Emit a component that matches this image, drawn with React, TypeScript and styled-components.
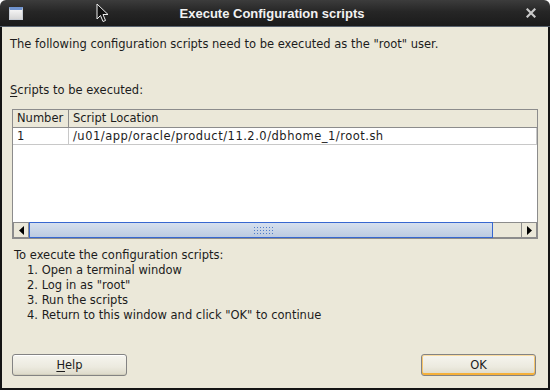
import React from "react";
import styled, { createGlobalStyle } from "styled-components";

const Global = createGlobalStyle`
  html, body { margin: 0; padding: 0; background: #ffffff; }
  #root { width: 550px; height: 390px; }
`;

const Window = styled.div`
  position: relative;
  width: 550px;
  height: 390px;
  display: flex;
  flex-direction: column;
  font-family: "DejaVu Sans", "Liberation Sans", sans-serif;
  font-size: 11.5px;
  color: #1c1c1c;
  overflow: hidden;
`;

const TitleBar = styled.div`
  height: 26px;
  flex: none;
  display: flex;
  align-items: center;
  padding: 0 12px 0 9px;
  background: linear-gradient(#3c3c3c, #262626 45%, #1b1b1b);
  border-radius: 6px 6px 0 0;
  border-bottom: 1px solid #59636f;
`;

const TitleText = styled.div`
  flex: 1;
  text-align: center;
  font-family: "Liberation Sans", Arial, sans-serif;
  font-weight: bold;
  font-size: 13px;
  color: #f2f2f2;
  padding-right: 3px;
`;

const WinIcon = styled.div`
  width: 12px;
  height: 9px;
  border: 1px solid #c8cdd5;
  border-top: 3px solid #6f93cf;
  background: linear-gradient(#f4f4f4, #d6d6d6);
  box-sizing: content-box;
  margin-top: 1px;
`;

const CloseBtn = styled.div`
  width: 14px;
  display: flex;
  justify-content: center;
`;

const Body = styled.div`
  flex: 1;
  display: flex;
  flex-direction: column;
  background: #ebe8d9;
  border: 2px solid #141414;
  border-top: none;
  padding: 10px 10px 12px 8px;
`;

const Para = styled.div`
  line-height: 15px;
  height: 15px;
  white-space: nowrap;
`;

const Label = styled(Para)`
  margin-top: 31px;
`;

const U = styled.span`
  text-decoration: underline;
  text-underline-offset: 2px;
`;

const ScrollPane = styled.div`
  margin: 11px 0 0 2px;
  width: 524px;
  height: 128px;
  border: 1px solid #8c8c8c;
  background: #ffffff;
  display: flex;
  flex-direction: column;
`;

const Row = styled.div<{ $header?: boolean }>`
  display: grid;
  grid-template-columns: 56px 1fr;
  height: ${(p) => (p.$header ? 17 : 16)}px;
  background: ${(p) => (p.$header ? "#ebe8d9" : "#ffffff")};
  border-bottom: 1px solid ${(p) => (p.$header ? "#8c8c8c" : "#c8c8c8")};
`;

const Cell = styled.div<{ $header?: boolean; $wide?: boolean }>`
  padding-left: 4px;
  line-height: ${(p) => (p.$header ? 17 : 16)}px;
  letter-spacing: ${(p) => (p.$wide ? "0.5px" : "0")};
  border-right: 1px solid ${(p) => (p.$header ? "#8c8c8c" : "#c8c8c8")};
  white-space: nowrap;
  &:last-child { border-right: ${(p) => (p.$header ? "none" : "1px solid #c8c8c8")}; }
`;

const Viewport = styled.div`
  flex: 1;
`;

const HScroll = styled.div`
  height: 16px;
  display: flex;
  border-top: 1px solid #ffffff;
`;

const ArrowBtn = styled.div`
  width: 14px;
  height: 14px;
  border: 1px solid #8c8c8c;
  background: #ebe8d9;
  display: flex;
  align-items: center;
  justify-content: center;
  flex: none;
`;

const Thumb = styled.div`
  width: 462px;
  height: 14px;
  border: 1px solid #3767d0;
  background: linear-gradient(#d6e0ee, #bccbe0);
  display: flex;
  align-items: center;
  justify-content: center;
  flex: none;
`;

const Grip = styled.div`
  width: 21px;
  height: 8px;
  background-image: radial-gradient(circle, #4f7cc9 0.8px, transparent 1px);
  background-size: 3px 3px;
  margin-left: 5px;
`;

const Track = styled.div`
  flex: 1;
  height: 14px;
  border: 1px solid #8c8c8c;
  border-left: none;
  border-right: none;
  background: #ebe8d9;
`;

const Steps = styled.div`
  margin-top: 9px;
  margin-left: 4px;
  display: flex;
  flex-direction: column;
`;

const Step = styled(Para)`
  padding-left: 13px;
`;

const Spacer = styled.div`
  flex: 1;
`;

const Buttons = styled.div`
  display: flex;
  justify-content: space-between;
  padding: 0 2px 0 2px;
`;

const Button = styled.div<{ $default?: boolean }>`
  width: 113px;
  height: 20px;
  border: 1px solid #838383;
  border-radius: 3px;
  display: flex;
  align-items: center;
  justify-content: center;
  background: linear-gradient(#f6f5ef, #eceadf 60%, #dcd9c9);
  box-shadow: ${(p) =>
    p.$default
      ? "inset 0 -2px 0 #f5b03a, inset 0 1px 0 #fbdca0, inset 1px 0 0 #f7c66c, inset -1px 0 0 #f7c66c"
      : "inset 0 -1px 0 #d2cfbd, inset 0 1px 0 #ffffff"};
`;

const Cursor = styled.svg`
  position: absolute;
  left: 96px;
  top: 3px;
`;

export default function App() {
  return (
    <Window>
      <Global />
      <TitleBar>
        <WinIcon />
        <TitleText>Execute Configuration scripts</TitleText>
        <CloseBtn>
          <svg width="10" height="10" viewBox="0 0 10 10">
            <path d="M1.5 1.5 L8.5 8.5 M8.5 1.5 L1.5 8.5" stroke="#c9c9c9" strokeWidth="2.2" strokeLinecap="square" />
          </svg>
        </CloseBtn>
      </TitleBar>
      <Body>
        <Para>The following configuration scripts need to be executed as the "root" user.</Para>
        <Label>
          <U>S</U>cripts to be executed:
        </Label>
        <ScrollPane>
          <Row $header>
            <Cell $header>Number</Cell>
            <Cell $header>Script Location</Cell>
          </Row>
          <Row>
            <Cell>1</Cell>
            <Cell $wide>/u01/app/oracle/product/11.2.0/dbhome_1/root.sh</Cell>
          </Row>
          <Viewport />
          <HScroll>
            <ArrowBtn>
              <svg width="5" height="9" viewBox="0 0 5 9"><path d="M5 0 L0 4.5 L5 9 Z" fill="#000" /></svg>
            </ArrowBtn>
            <Thumb>
              <Grip />
            </Thumb>
            <Track />
            <ArrowBtn>
              <svg width="5" height="9" viewBox="0 0 5 9"><path d="M0 0 L5 4.5 L0 9 Z" fill="#000" /></svg>
            </ArrowBtn>
          </HScroll>
        </ScrollPane>
        <Steps>
          <Para>To execute the configuration scripts:</Para>
          <Step>1. Open a terminal window</Step>
          <Step>2. Log in as "root"</Step>
          <Step>3. Run the scripts</Step>
          <Step>4. Return to this window and click "OK" to continue</Step>
        </Steps>
        <Spacer />
        <Buttons>
          <Button>
            <span><U>H</U>elp</span>
          </Button>
          <Button $default>OK</Button>
        </Buttons>
      </Body>
      <Cursor width="14" height="20" viewBox="0 0 14 20">
        <path d="M1 1 L1 16 L4.5 12.5 L7 18.5 L9.5 17.5 L7 11.5 L12 11.5 Z" fill="#111" stroke="#eee" strokeWidth="1" />
      </Cursor>
    </Window>
  );
}
